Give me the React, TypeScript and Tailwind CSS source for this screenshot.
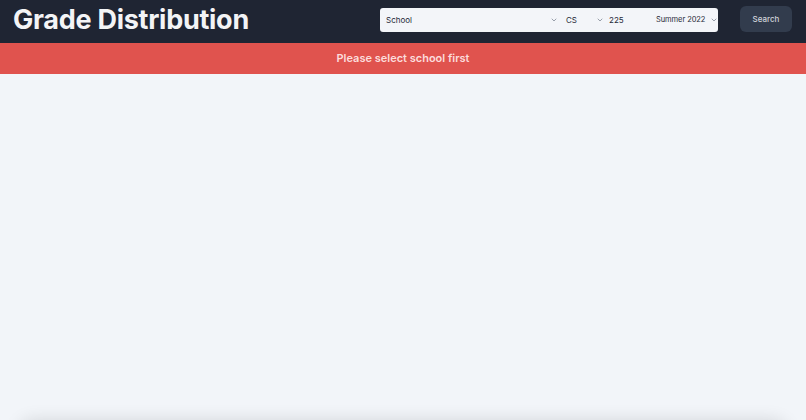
import { ChevronDown } from "lucide-react";

const Chevron = () => <ChevronDown className="w-2 h-2 shrink-0 text-gray-500" strokeWidth={2} />;

export default function App() {
  return (
    <div className="min-h-screen bg-[#f2f5f9] font-['Inter',sans-serif] overflow-hidden">
      {/* Header */}
      <header className="h-[43px] bg-[#1f2533] flex items-center justify-between pl-[13px] pr-[14px]">
        <h1 className="text-[27px] font-bold text-[#f3f4f6] leading-none tracking-[-0.01em] -mt-[4px]">Grade Distribution</h1>
        <div className="flex items-center gap-[22px] -mt-[3px]">
          <div className="flex items-center h-[24px] w-[338px] bg-[#f3f5f9] rounded-[3px] text-[8px] text-[#1f2937] whitespace-nowrap">
            <div className="flex items-center justify-between w-[180px] pl-[6px] pr-[2px]">
              <span>School</span>
              <Chevron />
            </div>
            <div className="flex items-center justify-between w-[45px] pl-[6px] pr-[1px]">
              <span>CS</span>
              <Chevron />
            </div>
            <div className="w-[45px] pl-[4px]">225</div>
            <div className="flex items-center justify-between flex-1 pl-[6px] pr-0">
              <span className="text-[7.5px] tracking-[-0.01em]">Summer 2022</span>
              <Chevron />
            </div>
          </div>
          <button className="h-[26px] w-[52px] rounded-md bg-[#323c4d] text-[8px] font-medium text-[#d1d5db] -mt-[2px]">Search</button>
        </div>
      </header>

      {/* Alert */}
      <div className="h-[31px] bg-[#e0534e] flex items-center justify-center">
        <p className="text-[11px] font-semibold text-[#fcdcdc]">Please select school first</p>
      </div>

      {/* Results */}
      <main className="px-5 pt-[347px]">
        <div className="h-[300px] bg-white rounded-xl shadow-[0_0_18px_rgba(0,0,0,0.14)]" />
      </main>
    </div>
  );
}
